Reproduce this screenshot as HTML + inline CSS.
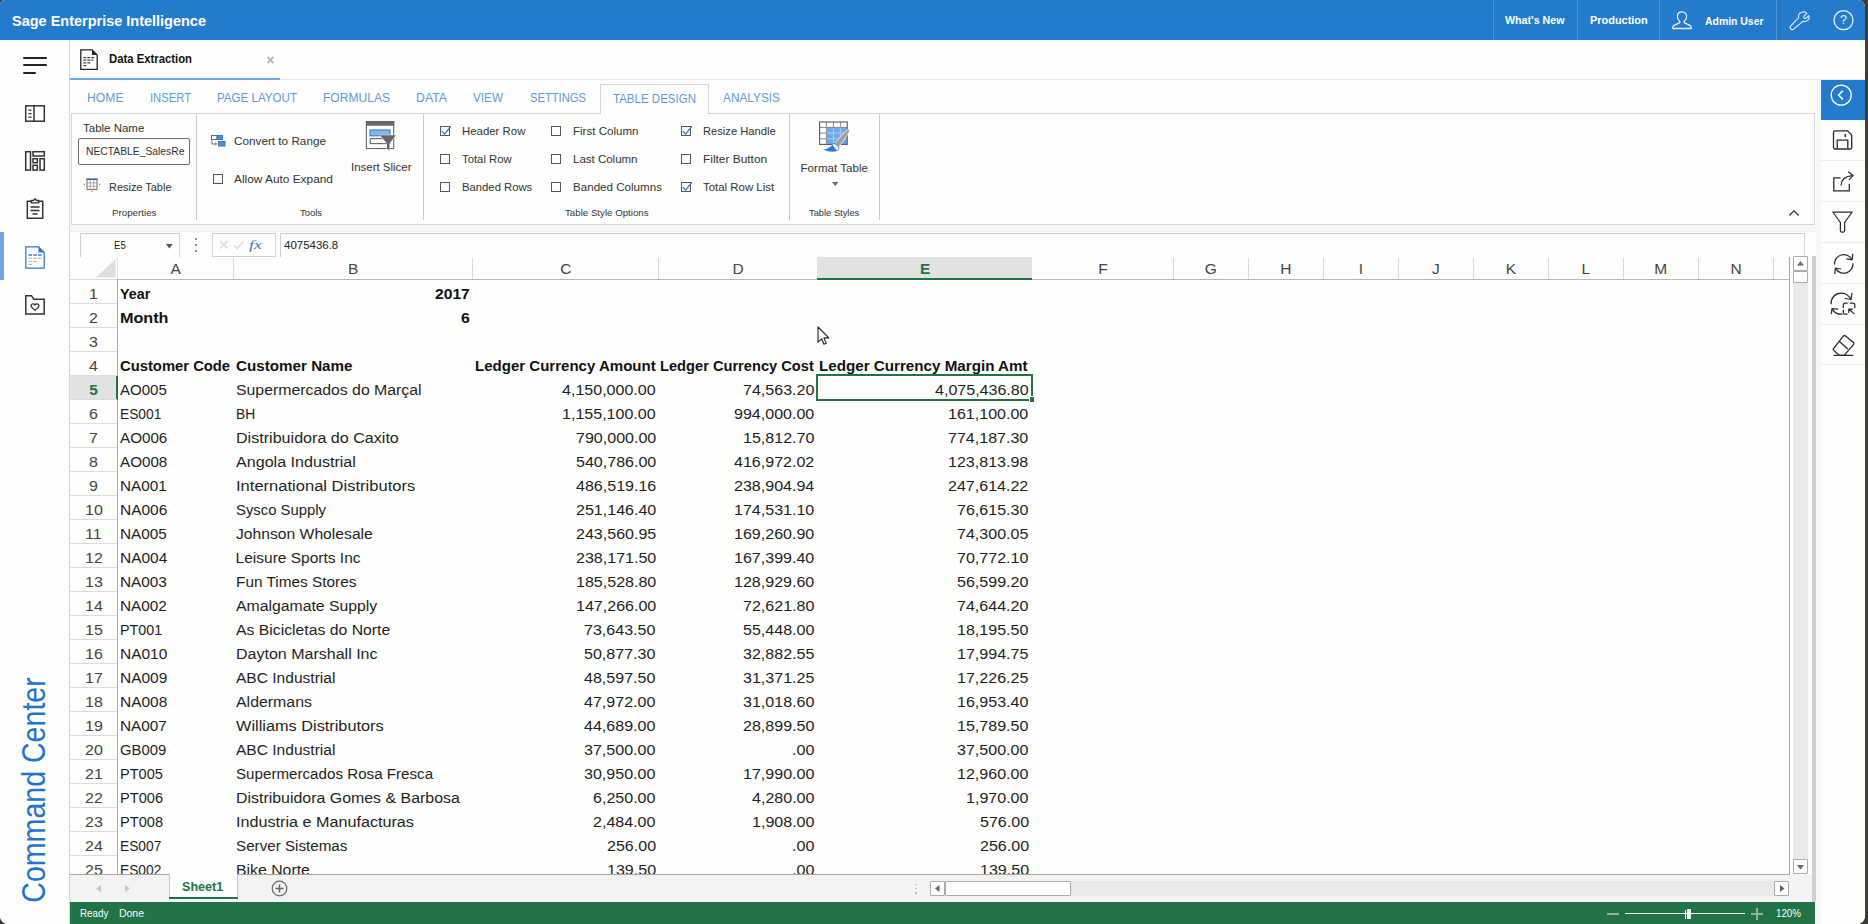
<!DOCTYPE html>
<html lang="en"><head><meta charset="utf-8"><title>Sage Enterprise Intelligence - Data Extraction</title>
<style>
html,body{margin:0;padding:0;}
body{width:1868px;height:924px;overflow:hidden;background:#3a3c38;font-family:"Liberation Sans",sans-serif;}
#win{position:absolute;left:0;top:0;width:1865px;height:924px;background:#fefefc;border-radius:5px 7px 8px 8px;overflow:hidden;}
section.g{position:absolute;left:0;top:0;width:0;height:0;}
.t{position:absolute;white-space:nowrap;transform-origin:0 50%;display:block;}
svg{overflow:visible;}
</style></head>
<body>
<div id="win">
<!-- top application header -->
<section class="g hdr"><div style="position:absolute;left:0px;top:0px;width:1865px;height:40px;background:#257bcb;"></div><span class="t" style="left:12.00px;top:12.75px;font-size:15.3px;line-height:15.3px;color:#fff;font-weight:bold;transform:scaleX(0.9467);">Sage Enterprise Intelligence</span><div style="position:absolute;left:1492.5px;top:0px;width:1px;height:40px;background:#4b93d6;"></div><div style="position:absolute;left:1577px;top:0px;width:1px;height:40px;background:#4b93d6;"></div><div style="position:absolute;left:1659px;top:0px;width:1px;height:40px;background:#4b93d6;"></div><div style="position:absolute;left:1776px;top:0px;width:1px;height:40px;background:#4b93d6;"></div><span class="t" style="left:1505.00px;top:14.67px;font-size:11.5px;line-height:11.5px;color:#fff;font-weight:bold;transform:scaleX(0.9286);">What&#x27;s New</span><span class="t" style="left:1589.70px;top:14.67px;font-size:11.5px;line-height:11.5px;color:#fff;font-weight:bold;transform:scaleX(0.9507);">Production</span><span class="t" style="left:1705.00px;top:15.77px;font-size:11.5px;line-height:11.5px;color:#fff;font-weight:bold;transform:scaleX(0.9064);">Admin User</span><svg style="position:absolute;left:1671px;top:10px;" width="22" height="20" viewBox="0 0 22 20" fill="none"><path d="M11 1.8c-3 0-4.6 2.2-4.6 4.8 0 1.9 .9 3.6 2.2 4.6 .5 .4 .4 1.3-.2 1.6L3.6 15.2C2.4 15.8 1.8 16.6 1.8 17.6v.9h18.4v-.9c0-1-.6-1.8-1.8-2.4l-4.8-2.4c-.6-.3-.7-1.2-.2-1.6 1.300-1 2.200-2.700 2.200-4.600 0-2.600-1.600-4.800-4.600-4.800z" stroke="#e8f1fb" stroke-width="1.3" stroke-linejoin="round"/></svg><svg style="position:absolute;left:1789px;top:10px;" width="21" height="20.2" viewBox="0 0 23 22" fill="none"><path d="M14.2 2.300c2.300-1.100 4.700-.300 5.700 1l-3.300 3.300 .3 2 2 .3 3.100-3.200c.8 1.900 .3 4.300-1.400 5.600-1.400 1-3 1.200-4.500 .6L5.900 20.400c-1 .9-2.500 .9-3.400 0-.9-.900-.9-2.400 0-3.400L11.100 8c-.6-1.700-.2-3.400 .8-4.500 .6-.6 1.400-.9 2.300-1.200z" stroke="#e8f1fb" stroke-width="1.2" stroke-linejoin="round" transform="translate(-.5,.3)"/></svg><svg style="position:absolute;left:1832px;top:9px;" width="23" height="23" viewBox="0 0 23 23" fill="none"><circle cx="11.5" cy="11.200" r="9.500" stroke="#e8f1fb" stroke-width="1.300"/></svg><span class="t" style="left:1840.10px;top:14.12px;font-size:12.5px;line-height:12.5px;color:#e8f1fb;">?</span></section>
<!-- left navigation sidebar -->
<section class="g side"><div style="position:absolute;left:0px;top:40px;width:69.2px;height:885px;background:#fefefc;border-right:1px solid #d9d9d9;"></div><div style="position:absolute;left:23px;top:56.8px;width:24px;height:2px;background:#222;border-radius:1px;"></div><div style="position:absolute;left:23px;top:64.4px;width:24px;height:2px;background:#222;border-radius:1px;"></div><div style="position:absolute;left:23px;top:72px;width:13.3px;height:2px;background:#222;border-radius:1px;"></div><svg style="position:absolute;left:24px;top:104px;" width="22" height="19" viewBox="0 0 22 19" fill="none"><rect x="1.700" y="1.800" width="18.600" height="15.400" stroke="#333" stroke-width="1.500"/><path d="M10 1.800v15.400" stroke="#333" stroke-width="1.500"/><path d="M4.300 6h3.200M4.300 9.500h3.200M4.300 13h3.200" stroke="#333" stroke-width="1.250"/></svg><svg style="position:absolute;left:24px;top:150px;" width="22" height="22" viewBox="0 0 22 22" fill="none"><rect x="1.700" y="1.700" width="4.800" height="18.400" stroke="#333" stroke-width="1.500"/><rect x="9" y="1.700" width="11.300" height="4.300" stroke="#333" stroke-width="1.500"/><rect x="9" y="8.700" width="4.300" height="4" stroke="#333" stroke-width="1.500"/><rect x="9" y="15.300" width="4.300" height="4.800" stroke="#333" stroke-width="1.500"/><rect x="16" y="8.700" width="4.300" height="11.400" stroke="#333" stroke-width="1.500"/></svg><svg style="position:absolute;left:25px;top:197px;" width="20" height="23" viewBox="0 0 20 23" fill="none"><path d="M6 4.300H2.300v17h15.400v-17H14" stroke="#333" stroke-width="1.500"/><path d="M6.200 5.800V3.500h2.300L10 1.800l1.500 1.700h2.300v2.300z" stroke="#333" stroke-width="1.300" stroke-linejoin="round"/><path d="M5.500 10h9M5.500 13.500h9M7.500 17h5" stroke="#333" stroke-width="1.500"/></svg><div style="position:absolute;left:0px;top:232px;width:4px;height:48px;background:#6ba9ea;"></div><svg style="position:absolute;left:24px;top:245px;" width="22" height="25" viewBox="0 0 22 25" fill="none"><path d="M1.800 1.800h12.700l5.700 5.700v15.700H1.800z" fill="#fff" stroke="#2a7bd0" stroke-width="1.250"/><path d="M14.500 1.800l5.700 5.700h-5.700z" fill="#2a7bd0"/><path d="M4.500 10h3.500M9.300 10h3.500M14 10h3.500" stroke="#2a7bd0" stroke-width="1.600"/><path d="M4.500 13.300h3.500M9.300 13.300h3.500M14 13.300h3.500M4.500 16.300h3.500M9.300 16.300h3.500M4.500 19.300h3.500" stroke="#b9b9b9" stroke-width="1.300"/></svg><svg style="position:absolute;left:24px;top:294px;" width="22" height="22" viewBox="0 0 22 22" fill="none"><path d="M1.800 1.800h5.700l2.300 3.400h10.400v14.900H1.800z" stroke="#333" stroke-width="1.500" stroke-linejoin="miter"/><path d="M11 16.300c-2.300-1.600-3.900-2.800-3.900-4.500 0-1.200 .9-2 2-2 .8 0 1.500 .4 1.900 1.100 .4-.7 1.100-1.100 1.900-1.100 1.100 0 2 .8 2 2 0 1.700-1.600 2.900-3.900 4.500z" stroke="#333" stroke-width="1.250" stroke-linejoin="round"/></svg><div style="position:absolute;left:33.7px;top:789.8px;width:0;height:0;"><span class="cc" style="position:absolute;white-space:nowrap;left:0;top:0;font-size:33.500px;line-height:34px;color:#1f74d1;transform:translate(-50%,-50%) rotate(-90deg) scaleX(0.8529);">Command Center</span></div></section>
<!-- document tab strip -->
<section class="g doctabs"><svg style="position:absolute;left:79px;top:48px;" width="20" height="23" viewBox="0 0 20 23" fill="none"><path d="M1.800 1.800h11.200l5.200 5.200v14.400H1.800z" stroke="#222" stroke-width="1.300" fill="#fff"/><path d="M13 1.800l5.200 5.200H13z" fill="#222"/><path d="M4.300 9.500h3M8.300 9.500h3M12.300 9.500h3M4.300 12.200h3M8.300 12.200h3M12.300 12.200h2M4.300 14.900h3M8.300 14.900h3M4.300 17.600h3" stroke="#444" stroke-width="1.250"/></svg><span class="t" style="left:109.00px;top:52.54px;font-size:12px;line-height:12px;color:#111;font-weight:bold;transform:scaleX(0.9429);">Data Extraction</span><span class="t" style="left:266.20px;top:53.15px;font-size:14px;line-height:14px;color:#b3b3b3;font-weight:bold;">×</span><div style="position:absolute;left:70px;top:77.7px;width:210px;height:2.5px;background:#6ba9ea;"></div><div style="position:absolute;left:280px;top:78.5px;width:1585px;height:1px;background:#e6e6e6;"></div></section>
<!-- ribbon tab row -->
<section class="g ribtabs"><div style="position:absolute;left:70.5px;top:113px;width:1744.5px;height:111.5px;border:1px solid #d4d4d4;box-sizing:border-box;background:#fefefc;"></div><div style="position:absolute;left:600px;top:84px;width:109px;height:30px;border:1px solid #d4d4d4;border-bottom:none;box-sizing:border-box;background:#fefefc;"></div><span class="t" style="left:87.00px;top:92.19px;font-size:12.3px;line-height:12.3px;color:#5b9cdc;transform:scaleX(0.9891);">HOME</span><span class="t" style="left:150.00px;top:92.19px;font-size:12.3px;line-height:12.3px;color:#5b9cdc;transform:scaleX(0.9135);">INSERT</span><span class="t" style="left:217.00px;top:92.19px;font-size:12.3px;line-height:12.3px;color:#5b9cdc;transform:scaleX(0.9413);">PAGE LAYOUT</span><span class="t" style="left:323.00px;top:92.19px;font-size:12.3px;line-height:12.3px;color:#5b9cdc;transform:scaleX(0.9804);">FORMULAS</span><span class="t" style="left:416.00px;top:92.19px;font-size:12.3px;line-height:12.3px;color:#5b9cdc;">DATA</span><span class="t" style="left:473.00px;top:92.19px;font-size:12.3px;line-height:12.3px;color:#5b9cdc;transform:scaleX(0.9543);">VIEW</span><span class="t" style="left:530.00px;top:92.19px;font-size:12.3px;line-height:12.3px;color:#5b9cdc;transform:scaleX(0.9105);">SETTINGS</span><span class="t" style="left:613.00px;top:92.69px;font-size:12.3px;line-height:12.3px;color:#5b9cdc;transform:scaleX(0.9365);">TABLE DESIGN</span><span class="t" style="left:723.00px;top:92.19px;font-size:12.3px;line-height:12.3px;color:#5b9cdc;transform:scaleX(0.9620);">ANALYSIS</span></section>
<!-- ribbon: table design -->
<section class="g ribbon"><div style="position:absolute;left:196px;top:114px;width:1px;height:106px;background:#c9c9c9;"></div><div style="position:absolute;left:423px;top:114px;width:1px;height:106px;background:#c9c9c9;"></div><div style="position:absolute;left:788.8px;top:114px;width:1px;height:106px;background:#c9c9c9;"></div><div style="position:absolute;left:878.8px;top:114px;width:1px;height:106px;background:#c9c9c9;"></div><span class="t" style="left:82.50px;top:121.78px;font-size:11.6px;line-height:11.6px;color:#333;transform:scaleX(0.9903);">Table Name</span><div style="position:absolute;left:78px;top:138px;width:112px;height:26.5px;border:1px solid #6b6b6b;border-radius:2px;box-sizing:border-box;background:#fefefc;"></div><span class="t" style="left:85.50px;top:145.85px;font-size:11.4px;line-height:11.4px;color:#333;transform:scaleX(0.9056);">NECTABLE_SalesRe</span><svg style="position:absolute;left:83px;top:177px;" width="18" height="16" viewBox="0 0 18 16" fill="none"><rect x="4" y="2.300" width="10" height="10.200" fill="#fff" stroke="#777" stroke-width="1.100"/><path d="M4 5.900h10M4 9.200h10M7.400 2.500v10M10.700 2.500v10" stroke="#a8a0a8" stroke-width=".9"/><path d="M3.500 2.300h11" stroke="#3f5f8f" stroke-width="1.600"/><path d="M2 6.400L.4 7.600 2 8.800zM16 6.400l1.600 1.200-1.600 1.200zM7.800 13.700h2.400l-1.200 1.500z" fill="#e8743b"/></svg><span class="t" style="left:108.50px;top:180.98px;font-size:11.6px;line-height:11.6px;color:#333;transform:scaleX(0.9441);">Resize Table</span><span class="t" style="left:111.80px;top:207.50px;font-size:9.8px;line-height:9.8px;color:#333;transform:scaleX(0.9963);">Properties</span><svg style="position:absolute;left:211px;top:135px;" width="15" height="12" viewBox="0 0 15 12" fill="none"><rect x=".5" y=".5" width="5.500" height="4" fill="#fff" stroke="#5a6b7d" stroke-width="1"/><rect x="6" y=".5" width="5.500" height="4" fill="#4f8fd8" stroke="#3a78c2" stroke-width="1"/><rect x="7.500" y="6.500" width="6.500" height="4.500" fill="#4f8fd8" stroke="#3a78c2" stroke-width="1"/><path d="M1 5.500v3.500h4" stroke="#5a6b7d" stroke-width="1"/><path d="M4.200 7l2.300 2-2.300 2z" fill="#e8743b"/></svg><span class="t" style="left:234.00px;top:134.68px;font-size:11.6px;line-height:11.6px;color:#333;transform:scaleX(1.0119);">Convert to Range</span><div style="position:absolute;left:213px;top:174.3px;width:10.2px;height:10px;border:1px solid #555;box-sizing:border-box;background:#fff;"></div><span class="t" style="left:234.00px;top:172.88px;font-size:11.6px;line-height:11.6px;color:#333;transform:scaleX(1.0234);">Allow Auto Expand</span><svg style="position:absolute;left:365px;top:120px;" width="32" height="31" viewBox="0 0 32 31" fill="none"><rect x="1.400" y="1.500" width="27.300" height="27" fill="#fff" stroke="#666" stroke-width="1.100"/><rect x=".9" y="1" width="28.300" height="4.700" fill="#666"/><rect x="5" y="10" width="20" height="5.800" fill="#86b6f0" stroke="#2f7bd6" stroke-width="1.100"/><rect x="5.300" y="18.600" width="19.500" height="5" fill="#fff" stroke="#666" stroke-width="1.100"/><path d="M14.900 15.300H30.800L24.500 23.600V30.400L22 28.800V23.600z" fill="#666" stroke="#fff" stroke-width="1" paint-order="stroke"/></svg><span class="t" style="left:350.50px;top:160.78px;font-size:11.6px;line-height:11.6px;color:#333;transform:scaleX(0.9879);">Insert Slicer</span><span class="t" style="left:299.70px;top:207.50px;font-size:9.8px;line-height:9.8px;color:#333;transform:scaleX(0.9660);">Tools</span><div style="position:absolute;left:440.2px;top:126px;width:10.2px;height:10.2px;border:1px solid #555;box-sizing:border-box;background:#fff;"></div><svg style="position:absolute;left:440.2px;top:126px;" width="10.2" height="10.2" viewBox="0 0 10.2 10.2" fill="none"><path d="M1.700 5.200l2.900 3 6.300-7.800" stroke="#2f6fc0" stroke-width="1.200"/></svg><span class="t" style="left:462.00px;top:125.38px;font-size:11.6px;line-height:11.6px;color:#333;transform:scaleX(0.9833);">Header Row</span><div style="position:absolute;left:440.2px;top:153.8px;width:10.2px;height:10.2px;border:1px solid #555;box-sizing:border-box;background:#fff;"></div><span class="t" style="left:462.00px;top:153.18px;font-size:11.6px;line-height:11.6px;color:#333;transform:scaleX(0.9778);">Total Row</span><div style="position:absolute;left:440.2px;top:181.9px;width:10.2px;height:10.2px;border:1px solid #555;box-sizing:border-box;background:#fff;"></div><span class="t" style="left:462.00px;top:181.18px;font-size:11.6px;line-height:11.6px;color:#333;transform:scaleX(0.9734);">Banded Rows</span><div style="position:absolute;left:551px;top:126px;width:10.2px;height:10.2px;border:1px solid #555;box-sizing:border-box;background:#fff;"></div><span class="t" style="left:573.00px;top:125.38px;font-size:11.6px;line-height:11.6px;color:#333;transform:scaleX(0.9963);">First Column</span><div style="position:absolute;left:551px;top:153.8px;width:10.2px;height:10.2px;border:1px solid #555;box-sizing:border-box;background:#fff;"></div><span class="t" style="left:573.00px;top:153.18px;font-size:11.6px;line-height:11.6px;color:#333;transform:scaleX(0.9905);">Last Column</span><div style="position:absolute;left:551px;top:181.9px;width:10.2px;height:10.2px;border:1px solid #555;box-sizing:border-box;background:#fff;"></div><span class="t" style="left:573.00px;top:181.18px;font-size:11.6px;line-height:11.6px;color:#333;">Banded Columns</span><div style="position:absolute;left:681px;top:126px;width:10.2px;height:10.2px;border:1px solid #555;box-sizing:border-box;background:#fff;"></div><svg style="position:absolute;left:681px;top:126px;" width="10.2" height="10.2" viewBox="0 0 10.2 10.2" fill="none"><path d="M1.700 5.200l2.900 3 6.300-7.800" stroke="#2f6fc0" stroke-width="1.200"/></svg><span class="t" style="left:702.80px;top:125.38px;font-size:11.6px;line-height:11.6px;color:#333;transform:scaleX(0.9637);">Resize Handle</span><div style="position:absolute;left:681px;top:153.8px;width:10.2px;height:10.2px;border:1px solid #555;box-sizing:border-box;background:#fff;"></div><span class="t" style="left:702.80px;top:153.18px;font-size:11.6px;line-height:11.6px;color:#333;transform:scaleX(1.0266);">Filter Button</span><div style="position:absolute;left:681px;top:181.9px;width:10.2px;height:10.2px;border:1px solid #555;box-sizing:border-box;background:#fff;"></div><svg style="position:absolute;left:681px;top:181.9px;" width="10.2" height="10.2" viewBox="0 0 10.2 10.2" fill="none"><path d="M1.700 5.200l2.900 3 6.300-7.800" stroke="#2f6fc0" stroke-width="1.200"/></svg><span class="t" style="left:702.80px;top:181.18px;font-size:11.6px;line-height:11.6px;color:#333;transform:scaleX(0.9861);">Total Row List</span><span class="t" style="left:564.70px;top:207.70px;font-size:9.8px;line-height:9.8px;color:#333;transform:scaleX(0.9901);">Table Style Options</span><svg style="position:absolute;left:818.5px;top:121.1px;" width="31" height="31" viewBox="0 0 31 31" fill="none"><rect x=".6" y="1" width="27.600" height="22.400" fill="#fff"/><rect x="7.400" y="6.400" width="20.800" height="17" fill="#6ea9ef"/><path d="M14.400 6.400v17M21.400 6.400v17M7.400 12.100h20.800M7.400 17.800h20.800" stroke="#a9cdf7" stroke-width="1"/><path d="M7.400 1v22.400M14.400 1v5.400M21.400 1v5.400M.6 6.400h27.600M.6 12.100h6.800M.6 17.800h6.800" stroke="#8a8a8a" stroke-width="1"/><rect x=".6" y="1" width="27.600" height="22.400" stroke="#5a5a5a" stroke-width="1.100"/><path d="M28.300 9c1.300-.9 2.600 .3 1.800 1.700L19.600 25.800l-4-3z" fill="#9d9d9d" stroke="#fff" stroke-width="1.200" paint-order="stroke"/><path d="M15 22.200l5 3.700c.2 1.700-.7 3.300-2.200 4.100l-4.600-5.800c.3-.9 .9-1.600 1.800-2z" fill="#fff" stroke="#3f86dc" stroke-width=".9"/><path d="M13.200 24.200l4.600 5.800c-3.600 1.300-8.700 1-13.300-1.500 3.700-.5 6.600-1.900 8.700-4.300z" fill="#2f7bd6"/></svg><span class="t" style="left:800.50px;top:162.18px;font-size:11.6px;line-height:11.6px;color:#333;">Format Table</span><svg style="position:absolute;left:831.8px;top:181.6px;" width="6.4" height="4" viewBox="0 0 6.4 4" fill="none"><path d="M0 0h6.400l-3.200 4z" fill="#666"/></svg><span class="t" style="left:809.00px;top:207.70px;font-size:9.8px;line-height:9.8px;color:#333;transform:scaleX(0.9520);">Table Styles</span><svg style="position:absolute;left:1788px;top:208.5px;" width="12" height="8" viewBox="0 0 12 8" fill="none"><path d="M1.300 6.500l4.700-4.700 4.700 4.700" stroke="#333" stroke-width="1.250"/></svg></section>
<!-- formula bar -->
<section class="g fbar"><div style="position:absolute;left:70px;top:225px;width:1745.5px;height:7px;background:#f7f7f6;"></div><div style="position:absolute;left:70px;top:231px;width:1745.5px;height:1px;background:#f0f0ef;"></div><div style="position:absolute;left:80px;top:233px;width:100px;height:25px;border:1px solid #cfcfcf;box-sizing:border-box;background:#fefefc;"></div><span class="t" style="left:114.30px;top:239.99px;font-size:11px;line-height:11px;color:#222;transform:scaleX(0.8696);">E5</span><svg style="position:absolute;left:166.3px;top:243.5px;" width="6.6" height="4.5" viewBox="0 0 6.6 4.5" fill="none"><path d="M0 0h6.600l-3.300 4.500z" fill="#555"/></svg><div style="position:absolute;left:194.8px;top:238.4px;width:2px;height:2px;background:#666;border-radius:1px;"></div><div style="position:absolute;left:194.8px;top:244px;width:2px;height:2px;background:#666;border-radius:1px;"></div><div style="position:absolute;left:194.8px;top:249.7px;width:2px;height:2px;background:#666;border-radius:1px;"></div><div style="position:absolute;left:212px;top:233px;width:64px;height:24px;border:1px solid #cfcfcf;box-sizing:border-box;background:#fefefc;"></div><svg style="position:absolute;left:219px;top:240px;" width="9.5" height="9.5" viewBox="0 0 9.5 9.5" fill="none"><path d="M1 1l7.500 7.500M8.500 1L1 8.500" stroke="#d4d4d4" stroke-width="1.200"/></svg><svg style="position:absolute;left:233px;top:240px;" width="12" height="10" viewBox="0 0 12 10" fill="none"><path d="M1 5.500l3 3.200L10.500 1" stroke="#d4d4d4" stroke-width="1.200"/></svg><span class="t" style="left:249.20px;top:237.87px;font-size:13.5px;line-height:13.5px;color:#3b78c4;font-style:italic;font-family:'Liberation Serif',serif;transform:scaleX(1.3139);">fx</span><div style="position:absolute;left:280px;top:233px;width:1525px;height:24px;border:1px solid #cfcfcf;border-bottom:none;box-sizing:border-box;background:#fefefc;"></div><span class="t" style="left:284.00px;top:239.69px;font-size:11px;line-height:11px;color:#222;transform:scaleX(1.0423);">4075436.8</span></section>
<!-- spreadsheet grid -->
<section class="g grid"><div style="position:absolute;left:70px;top:257px;width:1720px;height:617.5px;background:#fefefc;"></div><div style="position:absolute;left:817px;top:257px;width:214.8px;height:21.3px;background:#e2e2e2;"></div><div style="position:absolute;left:817px;top:278px;width:214.8px;height:2px;background:#217346;"></div><span class="t" style="left:170.58px;top:261.08px;font-size:15.5px;line-height:15.5px;color:#444;">A</span><div style="position:absolute;left:232.9px;top:258px;width:1px;height:21px;background:#d9d9d9;"></div><span class="t" style="left:348.08px;top:261.08px;font-size:15.5px;line-height:15.5px;color:#444;">B</span><div style="position:absolute;left:472px;top:258px;width:1px;height:21px;background:#d9d9d9;"></div><span class="t" style="left:560.20px;top:261.08px;font-size:15.5px;line-height:15.5px;color:#444;">C</span><div style="position:absolute;left:658px;top:258px;width:1px;height:21px;background:#d9d9d9;"></div><span class="t" style="left:732.45px;top:261.08px;font-size:15.5px;line-height:15.5px;color:#444;">D</span><span class="t" style="left:919.88px;top:261.08px;font-size:15.5px;line-height:15.5px;color:#217346;font-weight:bold;">E</span><span class="t" style="left:1098.32px;top:261.08px;font-size:15.5px;line-height:15.5px;color:#444;">F</span><div style="position:absolute;left:1172.5px;top:258px;width:1px;height:21px;background:#d9d9d9;"></div><span class="t" style="left:1204.77px;top:261.08px;font-size:15.5px;line-height:15.5px;color:#444;">G</span><div style="position:absolute;left:1247.5px;top:258px;width:1px;height:21px;background:#d9d9d9;"></div><span class="t" style="left:1280.20px;top:261.08px;font-size:15.5px;line-height:15.5px;color:#444;">H</span><div style="position:absolute;left:1322.5px;top:258px;width:1px;height:21px;background:#d9d9d9;"></div><span class="t" style="left:1358.65px;top:261.08px;font-size:15.5px;line-height:15.5px;color:#444;">I</span><div style="position:absolute;left:1397.5px;top:258px;width:1px;height:21px;background:#d9d9d9;"></div><span class="t" style="left:1431.92px;top:261.08px;font-size:15.5px;line-height:15.5px;color:#444;">J</span><div style="position:absolute;left:1472.5px;top:258px;width:1px;height:21px;background:#d9d9d9;"></div><span class="t" style="left:1505.63px;top:261.08px;font-size:15.5px;line-height:15.5px;color:#444;">K</span><div style="position:absolute;left:1547.5px;top:258px;width:1px;height:21px;background:#d9d9d9;"></div><span class="t" style="left:1581.49px;top:261.08px;font-size:15.5px;line-height:15.5px;color:#444;">L</span><div style="position:absolute;left:1622.5px;top:258px;width:1px;height:21px;background:#d9d9d9;"></div><span class="t" style="left:1654.34px;top:261.08px;font-size:15.5px;line-height:15.5px;color:#444;">M</span><div style="position:absolute;left:1697.5px;top:258px;width:1px;height:21px;background:#d9d9d9;"></div><span class="t" style="left:1730.45px;top:261.08px;font-size:15.5px;line-height:15.5px;color:#444;">N</span><div style="position:absolute;left:1773px;top:258px;width:1px;height:21px;background:#d9d9d9;"></div><div style="position:absolute;left:117px;top:278.7px;width:700px;height:1.3px;background:#b6b6b6;"></div><div style="position:absolute;left:1031.8px;top:278.7px;width:757.7px;height:1.3px;background:#b6b6b6;"></div><svg style="position:absolute;left:96px;top:258.5px;" width="19.5" height="18.5" viewBox="0 0 19.5 18.5" fill="none"><path d="M19.500 0v18.500H0z" fill="#dedede"/></svg><div style="position:absolute;left:117px;top:257px;width:1px;height:22px;background:#e4e4e4;"></div><div style="position:absolute;left:117px;top:279px;width:1px;height:595.5px;background:#a9a9a9;"></div><div style="position:absolute;left:70px;top:279px;width:47px;height:1px;background:#d9d9d9;"></div><div style="position:absolute;left:1789px;top:257px;width:1px;height:618px;background:#a6a6a6;"></div><div style="position:absolute;left:70px;top:874px;width:1720px;height:1px;background:#a6a6a6;"></div><div class="cells" style="position:absolute;left:70px;top:280px;width:1719px;height:594px;overflow:hidden;"><div style="position:absolute;left:-70px;top:-280px;"><div style="position:absolute;left:70px;top:375.8px;width:46px;height:23.7px;background:#e2e2e2;"></div><div style="position:absolute;left:116px;top:375.5px;width:2px;height:24.3px;background:#217346;"></div><div style="position:absolute;left:70px;top:302.8px;width:47px;height:1px;background:#dcdcdc;"></div><span class="t" style="left:89.16px;top:285.58px;font-size:15.5px;line-height:15.5px;color:#444;transform:scaleX(1.0300);">1</span><div style="position:absolute;left:70px;top:326.8px;width:47px;height:1px;background:#dcdcdc;"></div><span class="t" style="left:89.16px;top:309.58px;font-size:15.5px;line-height:15.5px;color:#444;transform:scaleX(1.0300);">2</span><div style="position:absolute;left:70px;top:350.8px;width:47px;height:1px;background:#dcdcdc;"></div><span class="t" style="left:89.16px;top:333.58px;font-size:15.5px;line-height:15.5px;color:#444;transform:scaleX(1.0300);">3</span><div style="position:absolute;left:70px;top:374.8px;width:47px;height:1px;background:#dcdcdc;"></div><span class="t" style="left:89.16px;top:357.58px;font-size:15.5px;line-height:15.5px;color:#444;transform:scaleX(1.0300);">4</span><div style="position:absolute;left:70px;top:398.8px;width:47px;height:1px;background:#dcdcdc;"></div><span class="t" style="left:89.29px;top:381.58px;font-size:15.5px;line-height:15.5px;color:#217346;font-weight:bold;">5</span><div style="position:absolute;left:70px;top:422.8px;width:47px;height:1px;background:#dcdcdc;"></div><span class="t" style="left:89.16px;top:405.58px;font-size:15.5px;line-height:15.5px;color:#444;transform:scaleX(1.0300);">6</span><div style="position:absolute;left:70px;top:446.8px;width:47px;height:1px;background:#dcdcdc;"></div><span class="t" style="left:89.16px;top:429.58px;font-size:15.5px;line-height:15.5px;color:#444;transform:scaleX(1.0300);">7</span><div style="position:absolute;left:70px;top:470.8px;width:47px;height:1px;background:#dcdcdc;"></div><span class="t" style="left:89.16px;top:453.58px;font-size:15.5px;line-height:15.5px;color:#444;transform:scaleX(1.0300);">8</span><div style="position:absolute;left:70px;top:494.8px;width:47px;height:1px;background:#dcdcdc;"></div><span class="t" style="left:89.16px;top:477.58px;font-size:15.5px;line-height:15.5px;color:#444;transform:scaleX(1.0300);">9</span><div style="position:absolute;left:70px;top:518.8px;width:47px;height:1px;background:#dcdcdc;"></div><span class="t" style="left:84.72px;top:501.58px;font-size:15.5px;line-height:15.5px;color:#444;transform:scaleX(1.0300);">10</span><div style="position:absolute;left:70px;top:542.8px;width:47px;height:1px;background:#dcdcdc;"></div><span class="t" style="left:85.31px;top:525.58px;font-size:15.5px;line-height:15.5px;color:#444;transform:scaleX(1.0300);">11</span><div style="position:absolute;left:70px;top:566.8px;width:47px;height:1px;background:#dcdcdc;"></div><span class="t" style="left:84.72px;top:549.58px;font-size:15.5px;line-height:15.5px;color:#444;transform:scaleX(1.0300);">12</span><div style="position:absolute;left:70px;top:590.8px;width:47px;height:1px;background:#dcdcdc;"></div><span class="t" style="left:84.72px;top:573.58px;font-size:15.5px;line-height:15.5px;color:#444;transform:scaleX(1.0300);">13</span><div style="position:absolute;left:70px;top:614.8px;width:47px;height:1px;background:#dcdcdc;"></div><span class="t" style="left:84.72px;top:597.58px;font-size:15.5px;line-height:15.5px;color:#444;transform:scaleX(1.0300);">14</span><div style="position:absolute;left:70px;top:638.8px;width:47px;height:1px;background:#dcdcdc;"></div><span class="t" style="left:84.72px;top:621.58px;font-size:15.5px;line-height:15.5px;color:#444;transform:scaleX(1.0300);">15</span><div style="position:absolute;left:70px;top:662.8px;width:47px;height:1px;background:#dcdcdc;"></div><span class="t" style="left:84.72px;top:645.58px;font-size:15.5px;line-height:15.5px;color:#444;transform:scaleX(1.0300);">16</span><div style="position:absolute;left:70px;top:686.8px;width:47px;height:1px;background:#dcdcdc;"></div><span class="t" style="left:84.72px;top:669.58px;font-size:15.5px;line-height:15.5px;color:#444;transform:scaleX(1.0300);">17</span><div style="position:absolute;left:70px;top:710.8px;width:47px;height:1px;background:#dcdcdc;"></div><span class="t" style="left:84.72px;top:693.58px;font-size:15.5px;line-height:15.5px;color:#444;transform:scaleX(1.0300);">18</span><div style="position:absolute;left:70px;top:734.8px;width:47px;height:1px;background:#dcdcdc;"></div><span class="t" style="left:84.72px;top:717.58px;font-size:15.5px;line-height:15.5px;color:#444;transform:scaleX(1.0300);">19</span><div style="position:absolute;left:70px;top:758.8px;width:47px;height:1px;background:#dcdcdc;"></div><span class="t" style="left:84.72px;top:741.58px;font-size:15.5px;line-height:15.5px;color:#444;transform:scaleX(1.0300);">20</span><div style="position:absolute;left:70px;top:782.8px;width:47px;height:1px;background:#dcdcdc;"></div><span class="t" style="left:84.72px;top:765.58px;font-size:15.5px;line-height:15.5px;color:#444;transform:scaleX(1.0300);">21</span><div style="position:absolute;left:70px;top:806.8px;width:47px;height:1px;background:#dcdcdc;"></div><span class="t" style="left:84.72px;top:789.58px;font-size:15.5px;line-height:15.5px;color:#444;transform:scaleX(1.0300);">22</span><div style="position:absolute;left:70px;top:830.8px;width:47px;height:1px;background:#dcdcdc;"></div><span class="t" style="left:84.72px;top:813.58px;font-size:15.5px;line-height:15.5px;color:#444;transform:scaleX(1.0300);">23</span><div style="position:absolute;left:70px;top:854.8px;width:47px;height:1px;background:#dcdcdc;"></div><span class="t" style="left:84.72px;top:837.58px;font-size:15.5px;line-height:15.5px;color:#444;transform:scaleX(1.0300);">24</span><span class="t" style="left:84.72px;top:861.58px;font-size:15.5px;line-height:15.5px;color:#444;transform:scaleX(1.0300);">25</span><span class="t" style="left:119.80px;top:285.58px;font-size:15.5px;line-height:15.5px;color:#111;font-weight:bold;transform:scaleX(0.9219);">Year</span><span class="t" style="left:434.80px;top:285.58px;font-size:15.5px;line-height:15.5px;color:#111;font-weight:bold;transform:scaleX(1.0092);">2017</span><span class="t" style="left:119.80px;top:309.58px;font-size:15.5px;line-height:15.5px;color:#111;font-weight:bold;transform:scaleX(1.0435);">Month</span><span class="t" style="left:460.60px;top:309.58px;font-size:15.5px;line-height:15.5px;color:#111;font-weight:bold;transform:scaleX(1.0208);">6</span><span class="t" style="left:119.90px;top:357.58px;font-size:15.5px;line-height:15.5px;color:#111;font-weight:bold;transform:scaleX(0.9540);">Customer Code</span><span class="t" style="left:235.70px;top:357.58px;font-size:15.5px;line-height:15.5px;color:#111;font-weight:bold;transform:scaleX(0.9801);">Customer Name</span><span class="t" style="left:474.70px;top:357.58px;font-size:15.5px;line-height:15.5px;color:#111;font-weight:bold;transform:scaleX(0.9699);">Ledger Currency Amount</span><span class="t" style="left:660.00px;top:357.58px;font-size:15.5px;line-height:15.5px;color:#111;font-weight:bold;transform:scaleX(0.9448);">Ledger Currency Cost</span><span class="t" style="left:819.40px;top:357.58px;font-size:15.5px;line-height:15.5px;color:#111;font-weight:bold;transform:scaleX(0.9792);">Ledger Currency Margin Amt</span><span class="t" style="left:119.90px;top:381.58px;font-size:15.5px;line-height:15.5px;color:#1f1f1f;transform:scaleX(0.9698);">AO005</span><span class="t" style="left:235.60px;top:381.58px;font-size:15.5px;line-height:15.5px;color:#1f1f1f;transform:scaleX(1.0210);">Supermercados do Marçal</span><span class="t" style="left:562.13px;top:381.58px;font-size:15.5px;line-height:15.5px;color:#1f1f1f;transform:scaleX(1.0350);">4,150,000.00</span><span class="t" style="left:743.33px;top:381.58px;font-size:15.5px;line-height:15.5px;color:#1f1f1f;transform:scaleX(1.0350);">74,563.20</span><span class="t" style="left:934.93px;top:381.58px;font-size:15.5px;line-height:15.5px;color:#1f1f1f;transform:scaleX(1.0350);">4,075,436.80</span><span class="t" style="left:119.90px;top:405.58px;font-size:15.5px;line-height:15.5px;color:#1f1f1f;transform:scaleX(0.8874);">ES001</span><span class="t" style="left:235.60px;top:405.58px;font-size:15.5px;line-height:15.5px;color:#1f1f1f;transform:scaleX(0.8870);">BH</span><span class="t" style="left:562.13px;top:405.58px;font-size:15.5px;line-height:15.5px;color:#1f1f1f;transform:scaleX(1.0350);">1,155,100.00</span><span class="t" style="left:734.41px;top:405.58px;font-size:15.5px;line-height:15.5px;color:#1f1f1f;transform:scaleX(1.0350);">994,000.00</span><span class="t" style="left:948.31px;top:405.58px;font-size:15.5px;line-height:15.5px;color:#1f1f1f;transform:scaleX(1.0350);">161,100.00</span><span class="t" style="left:119.90px;top:429.58px;font-size:15.5px;line-height:15.5px;color:#1f1f1f;transform:scaleX(0.9802);">AO006</span><span class="t" style="left:235.60px;top:429.58px;font-size:15.5px;line-height:15.5px;color:#1f1f1f;transform:scaleX(1.0383);">Distribuidora do Caxito</span><span class="t" style="left:575.51px;top:429.58px;font-size:15.5px;line-height:15.5px;color:#1f1f1f;transform:scaleX(1.0350);">790,000.00</span><span class="t" style="left:743.33px;top:429.58px;font-size:15.5px;line-height:15.5px;color:#1f1f1f;transform:scaleX(1.0350);">15,812.70</span><span class="t" style="left:948.31px;top:429.58px;font-size:15.5px;line-height:15.5px;color:#1f1f1f;transform:scaleX(1.0350);">774,187.30</span><span class="t" style="left:119.90px;top:453.58px;font-size:15.5px;line-height:15.5px;color:#1f1f1f;transform:scaleX(0.9802);">AO008</span><span class="t" style="left:235.60px;top:453.58px;font-size:15.5px;line-height:15.5px;color:#1f1f1f;transform:scaleX(1.0384);">Angola Industrial</span><span class="t" style="left:575.51px;top:453.58px;font-size:15.5px;line-height:15.5px;color:#1f1f1f;transform:scaleX(1.0350);">540,786.00</span><span class="t" style="left:734.41px;top:453.58px;font-size:15.5px;line-height:15.5px;color:#1f1f1f;transform:scaleX(1.0350);">416,972.02</span><span class="t" style="left:948.31px;top:453.58px;font-size:15.5px;line-height:15.5px;color:#1f1f1f;transform:scaleX(1.0350);">123,813.98</span><span class="t" style="left:119.90px;top:477.58px;font-size:15.5px;line-height:15.5px;color:#1f1f1f;transform:scaleX(0.9853);">NA001</span><span class="t" style="left:235.60px;top:477.58px;font-size:15.5px;line-height:15.5px;color:#1f1f1f;transform:scaleX(1.0667);">International Distributors</span><span class="t" style="left:575.51px;top:477.58px;font-size:15.5px;line-height:15.5px;color:#1f1f1f;transform:scaleX(1.0350);">486,519.16</span><span class="t" style="left:734.41px;top:477.58px;font-size:15.5px;line-height:15.5px;color:#1f1f1f;transform:scaleX(1.0350);">238,904.94</span><span class="t" style="left:948.31px;top:477.58px;font-size:15.5px;line-height:15.5px;color:#1f1f1f;transform:scaleX(1.0350);">247,614.22</span><span class="t" style="left:119.90px;top:501.58px;font-size:15.5px;line-height:15.5px;color:#1f1f1f;transform:scaleX(0.9980);">NA006</span><span class="t" style="left:235.60px;top:501.58px;font-size:15.5px;line-height:15.5px;color:#1f1f1f;transform:scaleX(0.9584);">Sysco Supply</span><span class="t" style="left:575.51px;top:501.58px;font-size:15.5px;line-height:15.5px;color:#1f1f1f;transform:scaleX(1.0350);">251,146.40</span><span class="t" style="left:734.41px;top:501.58px;font-size:15.5px;line-height:15.5px;color:#1f1f1f;transform:scaleX(1.0350);">174,531.10</span><span class="t" style="left:957.23px;top:501.58px;font-size:15.5px;line-height:15.5px;color:#1f1f1f;transform:scaleX(1.0350);">76,615.30</span><span class="t" style="left:119.90px;top:525.58px;font-size:15.5px;line-height:15.5px;color:#1f1f1f;transform:scaleX(0.9896);">NA005</span><span class="t" style="left:235.60px;top:525.58px;font-size:15.5px;line-height:15.5px;color:#1f1f1f;transform:scaleX(1.0112);">Johnson Wholesale</span><span class="t" style="left:575.51px;top:525.58px;font-size:15.5px;line-height:15.5px;color:#1f1f1f;transform:scaleX(1.0350);">243,560.95</span><span class="t" style="left:734.41px;top:525.58px;font-size:15.5px;line-height:15.5px;color:#1f1f1f;transform:scaleX(1.0350);">169,260.90</span><span class="t" style="left:957.23px;top:525.58px;font-size:15.5px;line-height:15.5px;color:#1f1f1f;transform:scaleX(1.0350);">74,300.05</span><span class="t" style="left:119.90px;top:549.58px;font-size:15.5px;line-height:15.5px;color:#1f1f1f;transform:scaleX(0.9980);">NA004</span><span class="t" style="left:235.60px;top:549.58px;font-size:15.5px;line-height:15.5px;color:#1f1f1f;">Leisure Sports Inc</span><span class="t" style="left:575.51px;top:549.58px;font-size:15.5px;line-height:15.5px;color:#1f1f1f;transform:scaleX(1.0350);">238,171.50</span><span class="t" style="left:734.41px;top:549.58px;font-size:15.5px;line-height:15.5px;color:#1f1f1f;transform:scaleX(1.0350);">167,399.40</span><span class="t" style="left:957.23px;top:549.58px;font-size:15.5px;line-height:15.5px;color:#1f1f1f;transform:scaleX(1.0350);">70,772.10</span><span class="t" style="left:119.90px;top:573.58px;font-size:15.5px;line-height:15.5px;color:#1f1f1f;transform:scaleX(0.9896);">NA003</span><span class="t" style="left:235.60px;top:573.58px;font-size:15.5px;line-height:15.5px;color:#1f1f1f;transform:scaleX(0.9913);">Fun Times Stores</span><span class="t" style="left:575.51px;top:573.58px;font-size:15.5px;line-height:15.5px;color:#1f1f1f;transform:scaleX(1.0350);">185,528.80</span><span class="t" style="left:734.41px;top:573.58px;font-size:15.5px;line-height:15.5px;color:#1f1f1f;transform:scaleX(1.0350);">128,929.60</span><span class="t" style="left:957.23px;top:573.58px;font-size:15.5px;line-height:15.5px;color:#1f1f1f;transform:scaleX(1.0350);">56,599.20</span><span class="t" style="left:119.90px;top:597.58px;font-size:15.5px;line-height:15.5px;color:#1f1f1f;transform:scaleX(0.9896);">NA002</span><span class="t" style="left:235.60px;top:597.58px;font-size:15.5px;line-height:15.5px;color:#1f1f1f;transform:scaleX(1.0179);">Amalgamate Supply</span><span class="t" style="left:575.51px;top:597.58px;font-size:15.5px;line-height:15.5px;color:#1f1f1f;transform:scaleX(1.0350);">147,266.00</span><span class="t" style="left:743.33px;top:597.58px;font-size:15.5px;line-height:15.5px;color:#1f1f1f;transform:scaleX(1.0350);">72,621.80</span><span class="t" style="left:957.23px;top:597.58px;font-size:15.5px;line-height:15.5px;color:#1f1f1f;transform:scaleX(1.0350);">74,644.20</span><span class="t" style="left:119.90px;top:621.58px;font-size:15.5px;line-height:15.5px;color:#1f1f1f;transform:scaleX(0.9218);">PT001</span><span class="t" style="left:235.60px;top:621.58px;font-size:15.5px;line-height:15.5px;color:#1f1f1f;transform:scaleX(1.0170);">As Bicicletas do Norte</span><span class="t" style="left:584.43px;top:621.58px;font-size:15.5px;line-height:15.5px;color:#1f1f1f;transform:scaleX(1.0350);">73,643.50</span><span class="t" style="left:743.33px;top:621.58px;font-size:15.5px;line-height:15.5px;color:#1f1f1f;transform:scaleX(1.0350);">55,448.00</span><span class="t" style="left:957.23px;top:621.58px;font-size:15.5px;line-height:15.5px;color:#1f1f1f;transform:scaleX(1.0350);">18,195.50</span><span class="t" style="left:119.90px;top:645.58px;font-size:15.5px;line-height:15.5px;color:#1f1f1f;transform:scaleX(0.9980);">NA010</span><span class="t" style="left:235.60px;top:645.58px;font-size:15.5px;line-height:15.5px;color:#1f1f1f;transform:scaleX(1.0330);">Dayton Marshall Inc</span><span class="t" style="left:584.43px;top:645.58px;font-size:15.5px;line-height:15.5px;color:#1f1f1f;transform:scaleX(1.0350);">50,877.30</span><span class="t" style="left:743.33px;top:645.58px;font-size:15.5px;line-height:15.5px;color:#1f1f1f;transform:scaleX(1.0350);">32,882.55</span><span class="t" style="left:957.23px;top:645.58px;font-size:15.5px;line-height:15.5px;color:#1f1f1f;transform:scaleX(1.0350);">17,994.75</span><span class="t" style="left:119.90px;top:669.58px;font-size:15.5px;line-height:15.5px;color:#1f1f1f;transform:scaleX(0.9980);">NA009</span><span class="t" style="left:235.60px;top:669.58px;font-size:15.5px;line-height:15.5px;color:#1f1f1f;transform:scaleX(1.0033);">ABC Industrial</span><span class="t" style="left:584.43px;top:669.58px;font-size:15.5px;line-height:15.5px;color:#1f1f1f;transform:scaleX(1.0350);">48,597.50</span><span class="t" style="left:743.33px;top:669.58px;font-size:15.5px;line-height:15.5px;color:#1f1f1f;transform:scaleX(1.0350);">31,371.25</span><span class="t" style="left:957.23px;top:669.58px;font-size:15.5px;line-height:15.5px;color:#1f1f1f;transform:scaleX(1.0350);">17,226.25</span><span class="t" style="left:119.90px;top:693.58px;font-size:15.5px;line-height:15.5px;color:#1f1f1f;transform:scaleX(0.9980);">NA008</span><span class="t" style="left:235.60px;top:693.58px;font-size:15.5px;line-height:15.5px;color:#1f1f1f;transform:scaleX(1.0258);">Aldermans</span><span class="t" style="left:584.43px;top:693.58px;font-size:15.5px;line-height:15.5px;color:#1f1f1f;transform:scaleX(1.0350);">47,972.00</span><span class="t" style="left:743.33px;top:693.58px;font-size:15.5px;line-height:15.5px;color:#1f1f1f;transform:scaleX(1.0350);">31,018.60</span><span class="t" style="left:957.23px;top:693.58px;font-size:15.5px;line-height:15.5px;color:#1f1f1f;transform:scaleX(1.0350);">16,953.40</span><span class="t" style="left:119.90px;top:717.58px;font-size:15.5px;line-height:15.5px;color:#1f1f1f;transform:scaleX(0.9896);">NA007</span><span class="t" style="left:235.60px;top:717.58px;font-size:15.5px;line-height:15.5px;color:#1f1f1f;transform:scaleX(1.0522);">Williams Distributors</span><span class="t" style="left:584.43px;top:717.58px;font-size:15.5px;line-height:15.5px;color:#1f1f1f;transform:scaleX(1.0350);">44,689.00</span><span class="t" style="left:743.33px;top:717.58px;font-size:15.5px;line-height:15.5px;color:#1f1f1f;transform:scaleX(1.0350);">28,899.50</span><span class="t" style="left:957.23px;top:717.58px;font-size:15.5px;line-height:15.5px;color:#1f1f1f;transform:scaleX(1.0350);">15,789.50</span><span class="t" style="left:119.90px;top:741.58px;font-size:15.5px;line-height:15.5px;color:#1f1f1f;transform:scaleX(0.9574);">GB009</span><span class="t" style="left:235.60px;top:741.58px;font-size:15.5px;line-height:15.5px;color:#1f1f1f;transform:scaleX(1.0033);">ABC Industrial</span><span class="t" style="left:584.43px;top:741.58px;font-size:15.5px;line-height:15.5px;color:#1f1f1f;transform:scaleX(1.0350);">37,500.00</span><span class="t" style="left:792.40px;top:741.58px;font-size:15.5px;line-height:15.5px;color:#1f1f1f;transform:scaleX(1.0350);">.00</span><span class="t" style="left:957.23px;top:741.58px;font-size:15.5px;line-height:15.5px;color:#1f1f1f;transform:scaleX(1.0350);">37,500.00</span><span class="t" style="left:119.90px;top:765.58px;font-size:15.5px;line-height:15.5px;color:#1f1f1f;transform:scaleX(0.9372);">PT005</span><span class="t" style="left:235.60px;top:765.58px;font-size:15.5px;line-height:15.5px;color:#1f1f1f;transform:scaleX(0.9777);">Supermercados Rosa Fresca</span><span class="t" style="left:584.43px;top:765.58px;font-size:15.5px;line-height:15.5px;color:#1f1f1f;transform:scaleX(1.0350);">30,950.00</span><span class="t" style="left:743.33px;top:765.58px;font-size:15.5px;line-height:15.5px;color:#1f1f1f;transform:scaleX(1.0350);">17,990.00</span><span class="t" style="left:957.23px;top:765.58px;font-size:15.5px;line-height:15.5px;color:#1f1f1f;transform:scaleX(1.0350);">12,960.00</span><span class="t" style="left:119.90px;top:789.58px;font-size:15.5px;line-height:15.5px;color:#1f1f1f;transform:scaleX(0.9437);">PT006</span><span class="t" style="left:235.60px;top:789.58px;font-size:15.5px;line-height:15.5px;color:#1f1f1f;transform:scaleX(1.0268);">Distribuidora Gomes &amp; Barbosa</span><span class="t" style="left:593.35px;top:789.58px;font-size:15.5px;line-height:15.5px;color:#1f1f1f;transform:scaleX(1.0350);">6,250.00</span><span class="t" style="left:752.25px;top:789.58px;font-size:15.5px;line-height:15.5px;color:#1f1f1f;transform:scaleX(1.0350);">4,280.00</span><span class="t" style="left:966.15px;top:789.58px;font-size:15.5px;line-height:15.5px;color:#1f1f1f;transform:scaleX(1.0350);">1,970.00</span><span class="t" style="left:119.90px;top:813.58px;font-size:15.5px;line-height:15.5px;color:#1f1f1f;transform:scaleX(0.9437);">PT008</span><span class="t" style="left:235.60px;top:813.58px;font-size:15.5px;line-height:15.5px;color:#1f1f1f;transform:scaleX(1.0428);">Industria e Manufacturas</span><span class="t" style="left:593.35px;top:813.58px;font-size:15.5px;line-height:15.5px;color:#1f1f1f;transform:scaleX(1.0350);">2,484.00</span><span class="t" style="left:752.25px;top:813.58px;font-size:15.5px;line-height:15.5px;color:#1f1f1f;transform:scaleX(1.0350);">1,908.00</span><span class="t" style="left:979.53px;top:813.58px;font-size:15.5px;line-height:15.5px;color:#1f1f1f;transform:scaleX(1.0350);">576.00</span><span class="t" style="left:119.90px;top:837.58px;font-size:15.5px;line-height:15.5px;color:#1f1f1f;transform:scaleX(0.8874);">ES007</span><span class="t" style="left:235.60px;top:837.58px;font-size:15.5px;line-height:15.5px;color:#1f1f1f;transform:scaleX(0.9797);">Server Sistemas</span><span class="t" style="left:606.73px;top:837.58px;font-size:15.5px;line-height:15.5px;color:#1f1f1f;transform:scaleX(1.0350);">256.00</span><span class="t" style="left:792.40px;top:837.58px;font-size:15.5px;line-height:15.5px;color:#1f1f1f;transform:scaleX(1.0350);">.00</span><span class="t" style="left:979.53px;top:837.58px;font-size:15.5px;line-height:15.5px;color:#1f1f1f;transform:scaleX(1.0350);">256.00</span><span class="t" style="left:119.90px;top:861.58px;font-size:15.5px;line-height:15.5px;color:#1f1f1f;transform:scaleX(0.8874);">ES002</span><span class="t" style="left:235.60px;top:861.58px;font-size:15.5px;line-height:15.5px;color:#1f1f1f;transform:scaleX(1.0212);">Bike Norte</span><span class="t" style="left:606.73px;top:861.58px;font-size:15.5px;line-height:15.5px;color:#1f1f1f;transform:scaleX(1.0350);">139.50</span><span class="t" style="left:792.40px;top:861.58px;font-size:15.5px;line-height:15.5px;color:#1f1f1f;transform:scaleX(1.0350);">.00</span><span class="t" style="left:979.53px;top:861.58px;font-size:15.5px;line-height:15.5px;color:#1f1f1f;transform:scaleX(1.0350);">139.50</span><div style="position:absolute;left:816px;top:374px;width:217px;height:26.5px;border:2px solid #217346;box-sizing:border-box;"></div><div style="position:absolute;left:1029.8px;top:397.3px;width:4.5px;height:4.7px;background:#217346;border:1px solid #fefefc;box-sizing:content-box;margin:-1px;"></div><svg style="position:absolute;left:816.5px;top:325.5px;" width="13" height="20" viewBox="0 0 13 20" fill="none"><path d="M1 1v15.200l3.600-3.400 2.300 5.400 2.300-1-2.300-5.300h4.900z" fill="#fff" stroke="#222" stroke-width="1.100" stroke-linejoin="round"/></svg></div></div></section>
<!-- scrollbars -->
<section class="g vscroll"><div style="position:absolute;left:1793px;top:256px;width:15px;height:618px;background:#e9e9eb;"></div><div style="position:absolute;left:1793px;top:256px;width:15px;height:14.5px;background:#fefefc;border:1px solid #ababab;box-sizing:border-box;border-radius:1px;"></div><svg style="position:absolute;left:1797px;top:260.5px;" width="7" height="4.5" viewBox="0 0 7 4.5" fill="none"><path d="M0 4.500h7L3.500 0z" fill="#666"/></svg><div style="position:absolute;left:1793px;top:270.5px;width:15px;height:12.5px;background:#fefefc;border:1px solid #ababab;box-sizing:border-box;border-radius:1px;"></div><div style="position:absolute;left:1793px;top:859px;width:15px;height:15px;background:#fefefc;border:1px solid #ababab;box-sizing:border-box;border-radius:1px;"></div><svg style="position:absolute;left:1797px;top:864.5px;" width="7" height="4.5" viewBox="0 0 7 4.5" fill="none"><path d="M0 0h7L3.500 4.500z" fill="#666"/></svg><div style="position:absolute;left:1812.2px;top:256px;width:3.4px;height:646px;background:#cfcfd2;"></div></section>
<!-- sheet tab bar -->
<section class="g sheetbar"><div style="position:absolute;left:70px;top:875px;width:1742px;height:27px;background:#f3f3f2;"></div><div style="position:absolute;left:169px;top:873.5px;width:69px;height:25.3px;background:#fefefc;border-left:1px solid #c6c6c6;border-right:1px solid #c6c6c6;box-sizing:border-box;"></div><div style="position:absolute;left:169px;top:896.6px;width:69px;height:2.2px;background:#217346;"></div><span class="t" style="left:182.30px;top:880.10px;font-size:13px;line-height:13px;color:#217346;font-weight:bold;transform:scaleX(0.9664);">Sheet1</span><svg style="position:absolute;left:95.5px;top:885px;" width="5" height="7" viewBox="0 0 5 7" fill="none"><path d="M5 0v7L0 3.500z" fill="#c4c4c4"/></svg><svg style="position:absolute;left:124.5px;top:885px;" width="5" height="7" viewBox="0 0 5 7" fill="none"><path d="M0 0v7l5-3.500z" fill="#c4c4c4"/></svg><svg style="position:absolute;left:270.5px;top:879.5px;" width="17" height="17" viewBox="0 0 17 17" fill="none"><circle cx="8.500" cy="8.500" r="7.300" stroke="#666" stroke-width="1.200"/><path d="M8.500 4.500v8M4.500 8.500h8" stroke="#666" stroke-width="1.500"/></svg><div style="position:absolute;left:915px;top:883.7px;width:1.6px;height:1.6px;background:#bdbdbd;"></div><div style="position:absolute;left:915px;top:887.9px;width:1.6px;height:1.6px;background:#bdbdbd;"></div><div style="position:absolute;left:915px;top:892.1px;width:1.6px;height:1.6px;background:#bdbdbd;"></div><div style="position:absolute;left:930px;top:881.3px;width:859px;height:14.4px;background:#e9e9eb;"></div><div style="position:absolute;left:930px;top:881.3px;width:14.5px;height:14.4px;background:#fefefc;border:1px solid #ababab;box-sizing:border-box;border-radius:1px;"></div><svg style="position:absolute;left:935px;top:885px;" width="4.5" height="7" viewBox="0 0 4.5 7" fill="none"><path d="M4.500 0v7L0 3.500z" fill="#666"/></svg><div style="position:absolute;left:944.5px;top:881.3px;width:126.5px;height:14.4px;background:#fefefc;border:1px solid #ababab;box-sizing:border-box;border-radius:1px;"></div><div style="position:absolute;left:1774px;top:881.3px;width:15px;height:14.4px;background:#fefefc;border:1px solid #ababab;box-sizing:border-box;border-radius:1px;"></div><svg style="position:absolute;left:1779.5px;top:885px;" width="4.5" height="7" viewBox="0 0 4.5 7" fill="none"><path d="M0 0v7l4.500-3.500z" fill="#666"/></svg></section>
<!-- status bar -->
<section class="g status"><div style="position:absolute;left:70px;top:901.8px;width:1745.2px;height:23.2px;background:#217346;"></div><span class="t" style="left:80.30px;top:908.06px;font-size:10.8px;line-height:10.8px;color:#fff;transform:scaleX(0.9065);">Ready</span><span class="t" style="left:118.90px;top:908.06px;font-size:10.8px;line-height:10.8px;color:#fff;transform:scaleX(0.9683);">Done</span><div style="position:absolute;left:1607px;top:913px;width:12px;height:1.8px;background:#8fb5a0;"></div><div style="position:absolute;left:1625px;top:913.4px;width:119.6px;height:1px;background:#fff;"></div><div style="position:absolute;left:1684.5px;top:909.5px;width:1px;height:9px;background:#fff;"></div><div style="position:absolute;left:1687px;top:909.3px;width:4.2px;height:9.7px;background:#f0f0f0;"></div><div style="position:absolute;left:1751px;top:913px;width:12px;height:1.8px;background:#8fb5a0;"></div><div style="position:absolute;left:1756.1px;top:908px;width:1.8px;height:12px;background:#8fb5a0;"></div><span class="t" style="left:1776.00px;top:908.06px;font-size:10.8px;line-height:10.8px;color:#fff;transform:scaleX(0.9051);">120%</span></section>
<!-- right tool panel -->
<section class="g rpanel"><div style="position:absolute;left:1815.7px;top:80px;width:5.3px;height:845px;background:#f6f6f5;"></div><div style="position:absolute;left:1821px;top:80px;width:44px;height:845px;background:#fefefc;"></div><div style="position:absolute;left:1821px;top:80px;width:44px;height:39.5px;background:#257bcb;"></div><svg style="position:absolute;left:1829px;top:83px;" width="24" height="24" viewBox="0 0 24 24" fill="none"><circle cx="12.200" cy="12.100" r="10" stroke="#fff" stroke-width="1.300"/><path d="M13.800 7.800l-4.300 4.300 4.300 4.300" stroke="#fff" stroke-width="1.500"/></svg><div style="position:absolute;left:1821px;top:159.5px;width:44px;height:1px;background:#ededed;"></div><div style="position:absolute;left:1821px;top:200.7px;width:44px;height:1px;background:#ededed;"></div><div style="position:absolute;left:1821px;top:241.5px;width:44px;height:1px;background:#ededed;"></div><div style="position:absolute;left:1821px;top:282.5px;width:44px;height:1px;background:#ededed;"></div><div style="position:absolute;left:1821px;top:323.5px;width:44px;height:1px;background:#ededed;"></div><div style="position:absolute;left:1821px;top:364px;width:44px;height:1px;background:#ededed;"></div><svg style="position:absolute;left:1832px;top:129px;" width="22" height="22" viewBox="0 0 22 22" fill="none"><path d="M3 1.800h12.500l4.200 4.200v12.500c0 .900-.600 1.500-1.500 1.500H3c-.900 0-1.500-.600-1.500-1.500V3.300c0-.900 .6-1.500 1.500-1.500z" stroke="#2a2a2a" stroke-width="1.300"/><path d="M5.200 19.500v-8.300h10.600v8.300" stroke="#2a2a2a" stroke-width="1.300"/><path d="M13.300 5v3" stroke="#2a2a2a" stroke-width="1.500"/></svg><svg style="position:absolute;left:1832px;top:170px;" width="24" height="23" viewBox="0 0 24 23" fill="none"><path d="M8.500 7.800H1.800v13h15.500v-7" stroke="#2a2a2a" stroke-width="1.250"/><path d="M9 15.500c.300-5.200 4-9.300 11.500-9.800" stroke="#2a2a2a" stroke-width="1.250"/><path d="M16.300 1.800l4.700 3.800-4 4.300" stroke="#2a2a2a" stroke-width="1.250"/></svg><svg style="position:absolute;left:1831px;top:210px;" width="24" height="24" viewBox="0 0 24 24" fill="none"><path d="M1.800 2h19.400l-7.600 10.500v8.300c0 .800-.500 1.200-1.200 1.200h-1.800c-.700 0-1.200-.400-1.200-1.200v-8.300z" stroke="#2a2a2a" stroke-width="1.250" stroke-linejoin="round"/></svg><svg style="position:absolute;left:1832px;top:252px;" width="24" height="24" viewBox="0 0 24 24" fill="none"><path d="M2.500 12.500a9.300 9.300 0 0 1 17.300-5.300" stroke="#2a2a2a" stroke-width="1.250"/><path d="M20.800 1.800l-.7 5.900-5.700-.9" stroke="#2a2a2a" stroke-width="1.250"/><path d="M21 11.300a9.300 9.300 0 0 1-17.300 5.300" stroke="#2a2a2a" stroke-width="1.250"/><path d="M2.700 22l.700-5.900 5.700 .9" stroke="#2a2a2a" stroke-width="1.250"/></svg><svg style="position:absolute;left:1822px;top:284px;" width="44" height="80" viewBox="1822 284 44 80" fill="none"><g stroke="#2a2a2a" stroke-width="1.250" stroke-linecap="round" stroke-linejoin="round"><path d="M1831.100 303.800c-.3-6 4.200-10.700 10-10.700 3.800 0 7.200 2 9.300 5.300"/><path d="M1851.900 293.300l-.8 6.200-6-1"/><path d="M1842 314.200c-4 .2-7.600-1.700-9.600-4.900"/><path d="M1831.400 313.600l.6-4.900 5.800 .5"/><path d="M1845.500 303.100h1.700M1850.300 303.100h1.700M1854.800 305.700v2M1843.300 305.700v2M1843.300 310.200v1.800M1845.400 314.200h1.700M1854.800 305.200c0-1.200-.8-2.100-2-2.100M1843.300 305.200c0-1.200 .8-2.100 2-2.100M1843.300 312.600c0 1 .6 1.600 1.500 1.600"/><path d="M1849 309.300l5 4.300M1848.800 312.600v-3.500h3.600"/></g><g stroke="#2a2a2a" stroke-width="1.300" stroke-linejoin="round" stroke-linecap="round"><path d="M1845.600 336l7.600 6.300c.8 .7 .9 1.500 .2 2.300l-9.200 10.800h-4.800l-5.500-4.800c-.8-.7-.9-1.500-.2-2.300l9.600-12.100c.7-.8 1.500-.9 2.300-.2z"/><path d="M1839.700 341.800l7.800 7"/><path d="M1834.100 355.400h18.600"/></g></svg></section>
</div>
</body></html>
